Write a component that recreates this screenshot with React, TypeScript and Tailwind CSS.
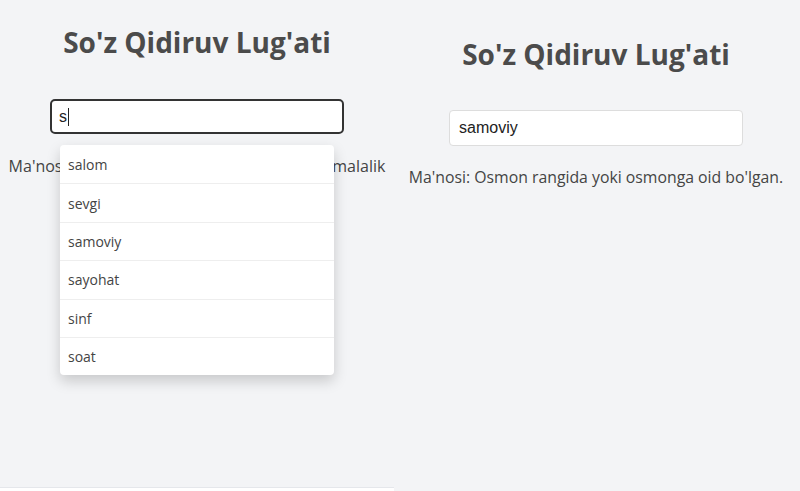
import React from 'react'

const words = ['salom', 'sevgi', 'samoviy', 'sayohat', 'sinf', 'soat']

export default function App() {
  return (
    <div className="flex w-[800px] h-[491px] bg-[#f3f4f6] overflow-hidden" style={{ fontFamily: '"Open Sans", "Noto Sans", sans-serif' }}>
      {/* left: typing, suggestions open */}
      <div className="w-[394px] h-full flex flex-col">
        <div className="flex-1 flex flex-col items-center pt-[22px]">
          <h1 className="text-[28px] leading-[40px] font-bold text-[#4b4b4b]">So'z Qidiruv Lug'ati</h1>
          <div className="relative mt-[37px]">
            <div className="w-[294px] h-[35px] bg-white border-2 border-[#333] rounded-[5px] flex items-center px-[7px] text-[16px] text-[#222]" style={{ fontFamily: '"Liberation Sans", Arial, sans-serif' }}>
              s<span className="w-px h-[18px] bg-[#222] ml-px" />
            </div>
            <ul className="absolute left-[10px] top-[46px] w-[274px] bg-white rounded-[4px] shadow-[0_6px_14px_rgba(0,0,0,0.18)] z-10">
              {words.map((w, i) => (
                <li key={w} className={`h-[38.4px] flex items-center px-[8px] text-[14px] text-[#444] ${i > 0 ? 'border-t border-[#eeeeee]' : ''}`}>
                  {w}
                </li>
              ))}
            </ul>
          </div>
          <p className="mt-[20px] text-[16px] text-[#444] whitespace-nowrap">Ma'nosi: Kishilar o'rtasidagi odob, xushmuomalalik</p>
        </div>
        <div className="h-[4px] bg-white border-t border-[#e5e7eb]" />
      </div>

      {/* right: word picked */}
      <div className="w-[392px] ml-[6px] flex flex-col items-center pt-[34px]">
        <h1 className="text-[28px] leading-[40px] font-bold text-[#4b4b4b]">So'z Qidiruv Lug'ati</h1>
        <input
          readOnly
          value="samoviy"
          className="mt-[36px] w-[294px] h-[36px] bg-white border border-[#dddddd] rounded-[4px] px-[9px] text-[16px] text-[#222] outline-none"
          style={{ fontFamily: '"Liberation Sans", Arial, sans-serif' }}
        />
        <p className="mt-[20px] text-[15.8px] text-[#444] whitespace-nowrap">Ma'nosi: Osmon rangida yoki osmonga oid bo'lgan.</p>
      </div>
    </div>
  )
}
